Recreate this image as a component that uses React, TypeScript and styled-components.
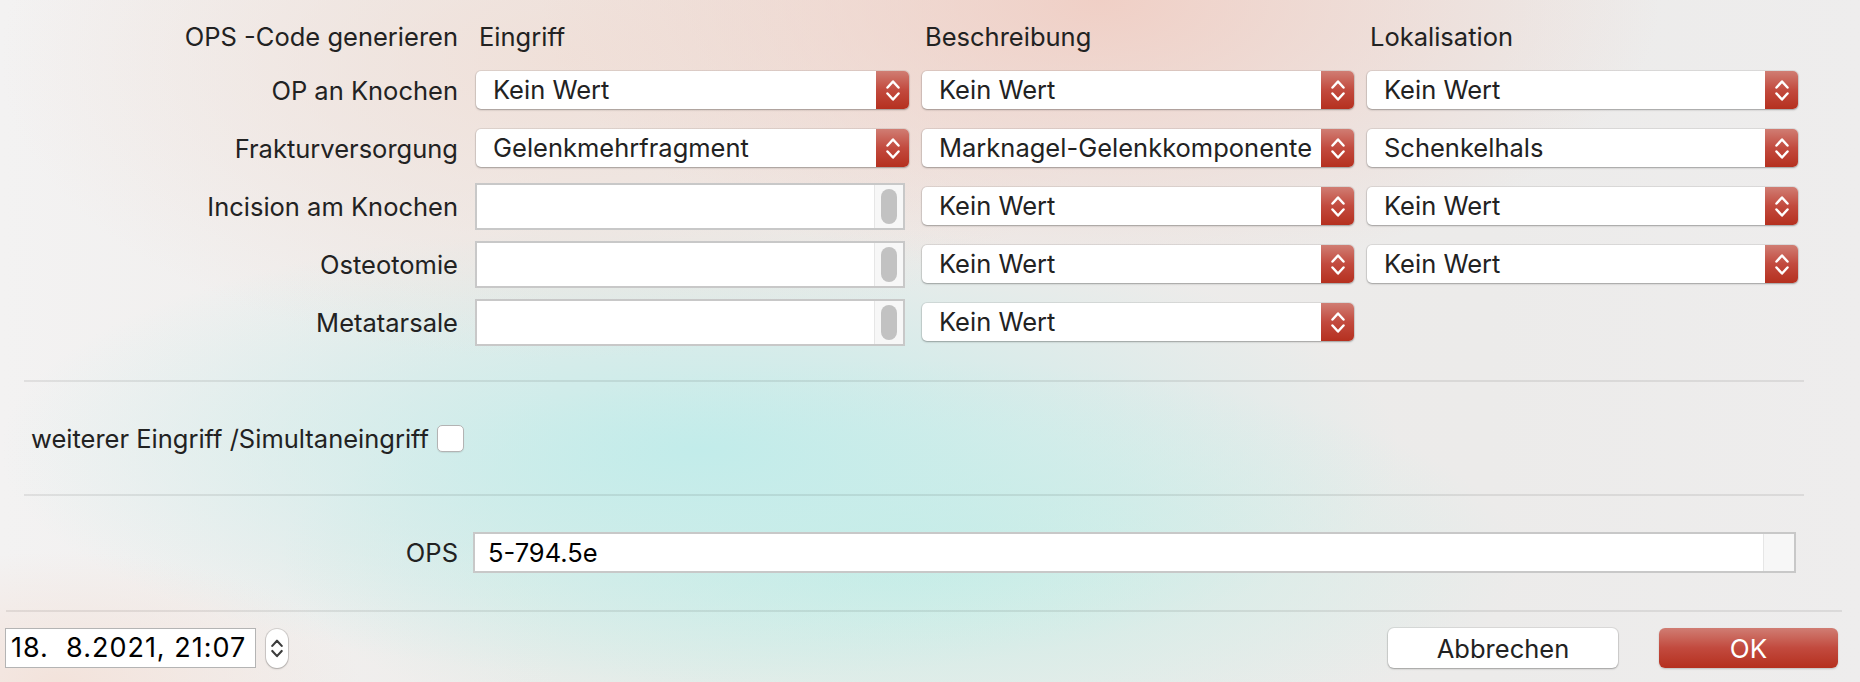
import React from "react";
import styled, { createGlobalStyle } from "styled-components";

const GlobalStyle = createGlobalStyle`
  html, body {
    margin: 0;
    padding: 0;
  }
  body {
    font-family: Inter, "Liberation Sans", sans-serif;
    color: #222222;
    overflow: hidden;
  }
`;

const rows = [
  { label: "OP an Knochen", kind: "select", eingriff: "Kein Wert", beschreibung: "Kein Wert", lokalisation: "Kein Wert" },
  { label: "Frakturversorgung", kind: "select", eingriff: "Gelenkmehrfragment", beschreibung: "Marknagel-Gelenkkomponente", lokalisation: "Schenkelhals" },
  { label: "Incision am Knochen", kind: "list", eingriff: "", beschreibung: "Kein Wert", lokalisation: "Kein Wert" },
  { label: "Osteotomie", kind: "list", eingriff: "", beschreibung: "Kein Wert", lokalisation: "Kein Wert" },
  { label: "Metatarsale", kind: "list", eingriff: "", beschreibung: "Kein Wert", lokalisation: null },
];

// up/down arrows of a macOS pop-up button
const Chevrons = ({ color }: { color: string }) => (
  <svg width={14} height={30} viewBox="0 0 14 30" fill="none">
    <polyline points="1.5,12.5 7,6.5 12.5,12.5" stroke={color} strokeWidth="2.5" strokeLinecap="round" strokeLinejoin="round" />
    <polyline points="1.5,18.5 7,24.5 12.5,18.5" stroke={color} strokeWidth="2.5" strokeLinecap="round" strokeLinejoin="round" />
  </svg>
);

const PopUp = ({ value }: { value: string }) => (
  <Select>
    <SelectValue>{value}</SelectValue>
    <RedStepper>
      <Chevrons color="#ffffff" />
    </RedStepper>
  </Select>
);

const ListField = () => (
  <TextList>
    <ListBody />
    <ScrollTrack>
      <Thumb />
    </ScrollTrack>
  </TextList>
);

export default function App() {
  return (
    <Window>
      <GlobalStyle />
      <Content>
        <FormGrid>
          <RowLabel>OPS -Code generieren</RowLabel>
          <ColumnHead>Eingriff</ColumnHead>
          <ColumnHead>Beschreibung</ColumnHead>
          <ColumnHead>Lokalisation</ColumnHead>
          {rows.map((r) => (
            <React.Fragment key={r.label}>
              <RowLabel>{r.label}</RowLabel>
              {r.kind === "select" ? <PopUp value={r.eingriff} /> : <ListField />}
              <PopUp value={r.beschreibung} />
              {r.lokalisation ? <PopUp value={r.lokalisation} /> : <span />}
            </React.Fragment>
          ))}
        </FormGrid>
        <Divider />
        <CheckRow>
          <span>weiterer Eingriff /Simultaneingriff</span>
          <Checkbox />
        </CheckRow>
        <Divider />
        <OpsRow>
          <OpsLabel>OPS</OpsLabel>
          <OpsField>
            <OpsValue>5-794.5e</OpsValue>
            <OpsTrack />
          </OpsField>
        </OpsRow>
      </Content>
      <FooterDivider />
      <Footer>
        <DateField>18.  8.2021, 21:07</DateField>
        <SmallStepper>
          <Chevrons color="#3c3c3c" />
        </SmallStepper>
        <Spacer />
        <CancelButton>Abbrechen</CancelButton>
        <OkButton>OK</OkButton>
      </Footer>
    </Window>
  );
}

const Window = styled.div`
  width: 1860px;
  height: 682px;
  display: flex;
  flex-direction: column;
  font-size: 25.5px;
  background:
    radial-gradient(ellipse 560px 280px at 1100px 0px, rgba(240, 206, 196, 0.95), rgba(240, 206, 196, 0) 100%),
    radial-gradient(ellipse 560px 300px at 560px 60px, rgba(240, 222, 214, 0.85), rgba(240, 222, 214, 0) 100%),
    radial-gradient(ellipse 700px 230px at 700px 450px, rgba(194, 236, 234, 1), rgba(194, 236, 234, 0) 100%),
    radial-gradient(ellipse 620px 200px at 900px 560px, rgba(198, 238, 230, 0.95), rgba(198, 238, 230, 0) 100%),
    radial-gradient(ellipse 300px 130px at 60px 682px, rgba(243, 226, 218, 0.95), rgba(243, 226, 218, 0) 100%),
    linear-gradient(90deg, #f3f2f2 0%, #eeecea 30%, #ecebea 80%, #eeeded 100%);
`;

const Content = styled.div`
  padding: 0 56px 0 24px;
`;

const FormGrid = styled.div`
  display: grid;
  grid-template-columns: 439px 433px 432px 431px;
  grid-template-rows: 30px repeat(5, 38px);
  column-gap: 13px;
  row-gap: 20px;
  padding-top: 21px;
  padding-bottom: 39px;
`;

const RowLabel = styled.div`
  align-self: center;
  text-align: right;
  padding-right: 5px;
  white-space: nowrap;
`;

const ColumnHead = styled.div`
  align-self: center;
  padding-left: 3px;
`;

const Select = styled.div`
  display: flex;
  height: 38px;
  background: #ffffff;
  border-radius: 5px;
  box-shadow: 0 0 0 1px rgba(0, 0, 0, 0.07), 0 1px 2px rgba(0, 0, 0, 0.28);
`;

const SelectValue = styled.div`
  flex: 1;
  padding-left: 17px;
  line-height: 38px;
  white-space: nowrap;
  overflow: hidden;
`;

const RedStepper = styled.div`
  width: 33px;
  display: flex;
  align-items: center;
  justify-content: center;
  border-radius: 0 5px 5px 0;
  background: linear-gradient(180deg, #d07d73 0%, #c24a3e 50%, #b5301f 100%);
`;

const TextList = styled.div`
  display: flex;
  height: 47px;
  margin: -4px 4px -5px -1px;
  box-sizing: border-box;
  border: 2px solid #c8c8c8;
  background: #ffffff;
`;

const ListBody = styled.div`
  flex: 1;
`;

const ScrollTrack = styled.div`
  width: 28px;
  display: flex;
  align-items: center;
  justify-content: center;
  background: #f7f7f7;
  border-left: 1px solid #e6e6e6;
`;

const Thumb = styled.div`
  width: 16px;
  height: 35px;
  border-radius: 8px;
  background: #c2c2c2;
`;

const Divider = styled.div`
  height: 2px;
  background: rgba(0, 0, 0, 0.08);
`;

const CheckRow = styled.div`
  height: 112px;
  display: flex;
  align-items: center;
  gap: 8px;
  padding-left: 7px;
`;

const Checkbox = styled.div`
  width: 27px;
  height: 27px;
  box-sizing: border-box;
  border: 1px solid #b3b3b3;
  border-radius: 5px;
  background: #ffffff;
  box-shadow: 0 1px 1px rgba(0, 0, 0, 0.08);
`;

const OpsRow = styled.div`
  display: flex;
  align-items: center;
  gap: 15px;
  padding: 36px 8px 37px 0;
`;

const OpsLabel = styled.div`
  width: 434px;
  text-align: right;
`;

const OpsField = styled.div`
  flex: 1;
  height: 41px;
  display: flex;
  box-sizing: border-box;
  border: 2px solid #c8c8c8;
  background: #ffffff;
`;

const OpsValue = styled.div`
  flex: 1;
  padding-left: 13px;
  line-height: 37px;
  color: #000000;
`;

const OpsTrack = styled.div`
  width: 30px;
  background: #f7f7f7;
  border-left: 1px solid #e6e6e6;
`;

const FooterDivider = styled.div`
  height: 2px;
  margin: 0 18px 0 6px;
  background: rgba(0, 0, 0, 0.08);
`;

const Footer = styled.div`
  display: flex;
  align-items: center;
  padding: 16px 22px 0 5px;
`;

const DateField = styled.div`
  width: 251px;
  height: 40px;
  box-sizing: border-box;
  border: 1px solid #b4b4b4;
  background: #ffffff;
  padding-left: 5px;
  font-size: 27px;
  letter-spacing: 1px;
  line-height: 38px;
  color: #000000;
  white-space: pre;
`;

const SmallStepper = styled.div`
  width: 22px;
  height: 39px;
  margin-left: 10px;
  box-sizing: border-box;
  display: flex;
  align-items: center;
  justify-content: center;
  background: #ffffff;
  border-radius: 11px;
  box-shadow: 0 0 0 1px rgba(0, 0, 0, 0.12), 0 1px 2px rgba(0, 0, 0, 0.2);

  svg {
    width: 12px;
    height: 28px;
  }
`;

const Spacer = styled.div`
  flex: 1;
`;

const CancelButton = styled.div`
  width: 230px;
  height: 40px;
  display: flex;
  align-items: center;
  justify-content: center;
  background: #ffffff;
  border-radius: 6px;
  box-shadow: 0 0 0 1px rgba(0, 0, 0, 0.07), 0 1px 2px rgba(0, 0, 0, 0.28);
`;

const OkButton = styled.div`
  width: 179px;
  height: 40px;
  margin-left: 41px;
  display: flex;
  align-items: center;
  justify-content: center;
  border-radius: 6px;
  background: linear-gradient(180deg, #d07d73 0%, #c24a3e 50%, #b5301f 100%);
  box-shadow: 0 1px 2px rgba(0, 0, 0, 0.2);
  color: #ffffff;
  font-size: 26px;
`;
